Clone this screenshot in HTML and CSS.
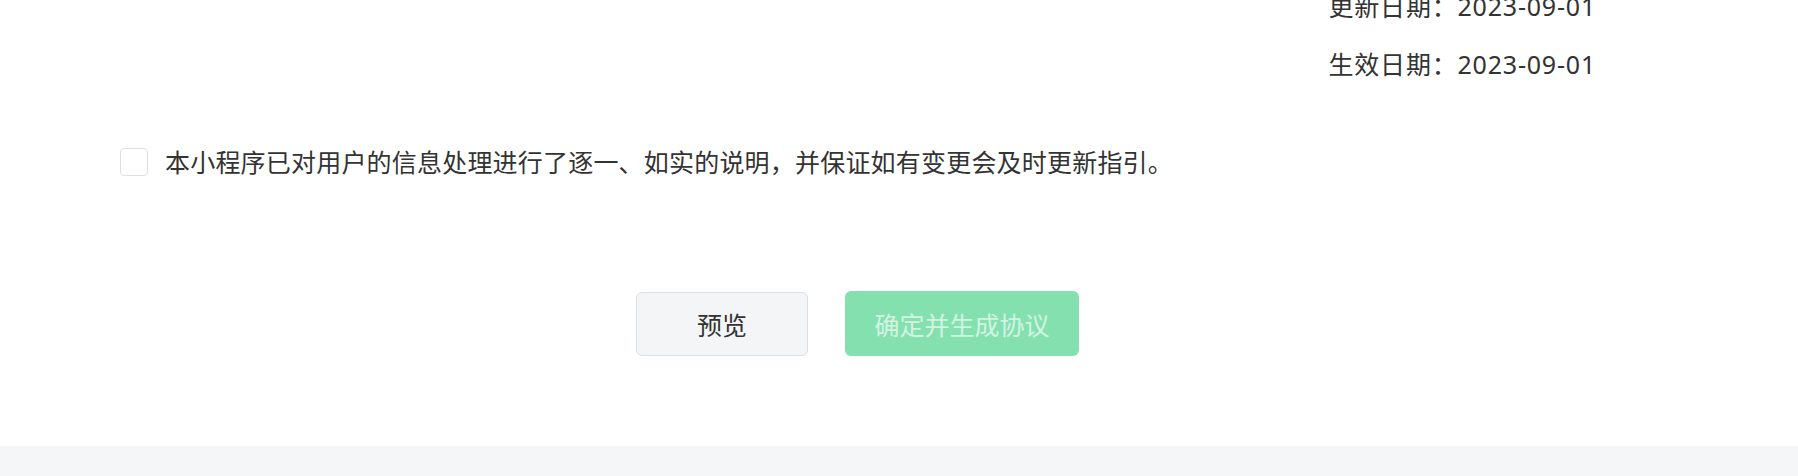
FILE: index.html
```html
<!DOCTYPE html>
<html lang="zh-CN">
<head>
<meta charset="utf-8">
<title>协议</title>
<link rel="stylesheet" href="styles.css">
</head>
<body>
<div class="page">
  <div class="panel">
    <div class="dates">
      <div class="date-line">更新日期：2023-09-01</div>
      <div class="date-line">生效日期：2023-09-01</div>
    </div>
    <label class="agree">
      <span class="checkbox"></span>
      <span class="agree-text">本小程序已对用户的信息处理进行了逐一、如实的说明，并保证如有变更会及时更新指引。</span>
    </label>
    <div class="actions">
      <button class="btn btn-preview" type="button">预览</button>
      <button class="btn btn-primary" type="button" disabled>确定并生成协议</button>
    </div>
  </div>
  <div class="footer"></div>
</div>
</body>
</html>
```
FILE: styles.css
```css
* { box-sizing: border-box; }
html, body {
  margin: 0;
  padding: 0;
  background: #f5f6f8;
  overflow: hidden;
}
body {
  font-family: "Noto Sans", "Noto Sans CJK SC", sans-serif;
  color: #333333;
  font-size: 25px;
}
.page {
  display: flex;
  flex-direction: column;
}
.panel {
  background: #ffffff;
  padding: 0 203px 90px 120px;
  display: flex;
  flex-direction: column;
  height: 446px;
}
.dates {
  align-self: flex-end;
  margin-top: -11px;
  display: flex;
  flex-direction: column;
  gap: 24px;
}
.date-line {
  line-height: 34px;
  white-space: nowrap;
  letter-spacing: 0.8px;
  margin-right: -1px;
}
.agree {
  margin-top: 64px;
  display: flex;
  align-items: center;
  gap: 17px;
  line-height: 34px;
}
.agree-text {
  letter-spacing: 0.2px;
}
.checkbox {
  width: 28px;
  height: 28px;
  border: 1px solid #dcdfe6;
  border-radius: 4px;
  background: #ffffff;
  flex: none;
}
.actions {
  margin-top: 112px;
  display: flex;
  justify-content: center;
  align-items: center;
  gap: 37px;
}
.btn {
  font-family: inherit;
  font-size: 25px;
  border-radius: 6px;
  height: 64px;
  padding: 0;
  cursor: pointer;
}
.btn-preview {
  width: 172px;
  background: #f4f5f7;
  border: 1px solid #dcdfe6;
  color: #333333;
}
.btn-primary {
  width: 234px;
  height: 65px;
  background: #85e0b0;
  border: none;
  color: #d3f4e2;
}
.footer {
  height: 40px;
  background: #f5f6f8;
}
```
